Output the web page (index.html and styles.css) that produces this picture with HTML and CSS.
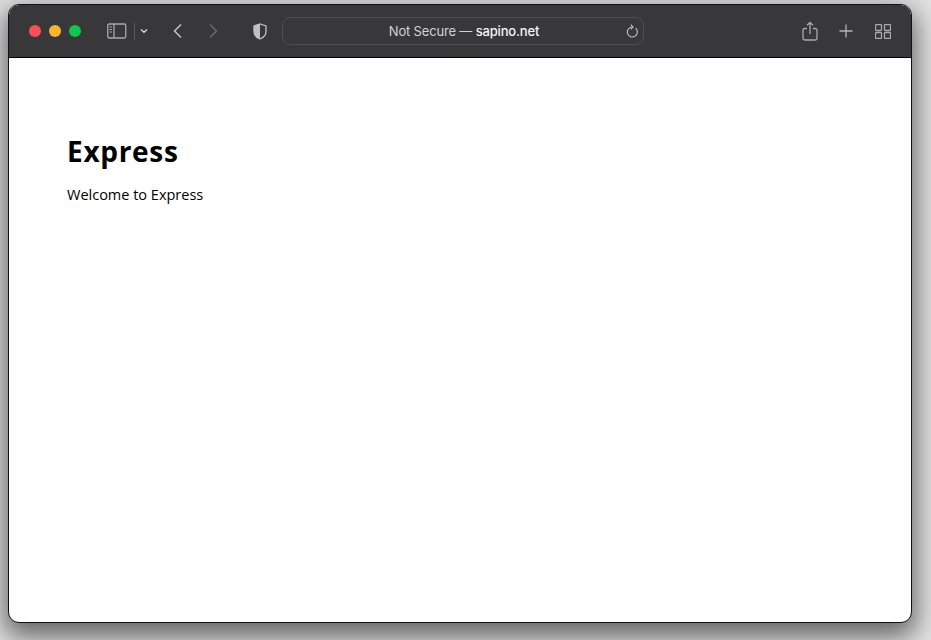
FILE: index.html

```html
<!doctype html>
<html lang="en">
<head>
    <meta charset="UTF-8">
    <title>Express</title>
    <link rel="stylesheet" href="styles.css">
</head>
<body>

<div class="window">
    <div class="toolbar">
        <div class="lights">
            <span class="light red"></span>
            <span class="light yellow"></span>
            <span class="light green"></span>
        </div>

        <svg class="icon sidebar-icon" width="20" height="16" viewBox="0 0 20 16">
            <rect x="0.75" y="1" width="18" height="14" rx="1.5"/>
            <path d="M7 1v14"/>
            <path class="thin" d="M2.5 4h2.500M2.500 6.500h2.500M2.500 9h2.500"/>
        </svg>
        <span class="divider"></span>
        <svg class="icon chevron-down" width="8" height="6" viewBox="0 0 8 6">
            <path d="M1 1.500l3 2.800 3-2.800"/>
        </svg>

        <svg class="icon back" width="10" height="16" viewBox="0 0 10 16">
            <path d="M8 1.500L1.500 8 8 14.500"/>
        </svg>
        <svg class="icon forward" width="10" height="16" viewBox="0 0 10 16">
            <path d="M2 1.500L8.500 8 2 14.500"/>
        </svg>

        <svg class="shield" width="14" height="17" viewBox="0 0 14 17">
            <path class="shield-fill" d="M7 1L1 3v5.500C1 12 3.500 14.600 7 16z"/>
            <path class="shield-line" d="M7 1l6 2v5.500C13 12 10.500 14.600 7 16 3.500 14.600 1 12 1 8.500V3z"/>
        </svg>

        <div class="url-bar">
            <span class="url-text">Not Secure — <span class="url-host">sapino.net</span></span>
            <svg class="icon reload" width="12" height="14" viewBox="0 0 12 14">
                <path d="M9.600 4.200A5 5 0 1 1 6 3"/>
                <path d="M4.800 0.700L7 3 4.800 5.300"/>
            </svg>
        </div>

        <svg class="icon share" width="16" height="20" viewBox="0 0 16 20">
            <path d="M5 7.500H2.800A1.800 1.800 0 0 0 1 9.300v7.900A1.800 1.800 0 0 0 2.800 19h10.400a1.800 1.800 0 0 0 1.800-1.800V9.300a1.800 1.800 0 0 0-1.800-1.800H11"/>
            <path d="M8 13V1.500M5 4.300l3-2.800 3 2.800"/>
        </svg>
        <svg class="icon plus" width="14" height="14" viewBox="0 0 14 14">
            <path d="M7 0.500v13M0.500 7h13"/>
        </svg>
        <svg class="icon tabs" width="16" height="15" viewBox="0 0 16 15">
            <rect x="0.500" y="0.500" width="6" height="6" rx="0.800"/>
            <rect x="9.500" y="0.500" width="6" height="6" rx="0.800"/>
            <rect x="0.500" y="8.500" width="6" height="6" rx="0.800"/>
            <rect x="9.500" y="8.500" width="6" height="6" rx="0.800"/>
        </svg>
    </div>

    <div class="content">
        <h1>Express</h1>
        <p>Welcome to Express</p>
    </div>
</div>

</body>
</html>
```

FILE: styles.css

```css
html, body {
    height: 100%;
    margin: 0;
}

body {
    background: #e2e2e2;
    overflow: hidden;
    padding: 4px 19px 0 8px;
    box-sizing: border-box;
}

.window {
    height: 619px;
    box-sizing: border-box;
    display: flex;
    flex-direction: column;
    background: #fff;
    border: 1px solid #111;
    border-radius: 11px;
    overflow: hidden;
    box-shadow: 0 10px 26px 4px rgba(0, 0, 0, .55);
}

.toolbar {
    height: 52px;
    flex: none;
    display: flex;
    align-items: center;
    padding-left: 20px;
    background: #38383b;
    border-bottom: 1px solid #000;
}

.lights {
    display: flex;
    gap: 8px;
    margin-right: 26px;
}

.light {
    width: 12px;
    height: 12px;
    border-radius: 50%;
}

.red { background: #fb4f57; }
.yellow { background: #fbb331; }
.green { background: #0cc653; }

.icon {
    fill: none;
    stroke: #a9a9ab;
    stroke-width: 1.3;
    flex: none;
}

.thin { stroke-width: 1; }

.divider {
    width: 1px;
    height: 17px;
    margin: 0 5px 0 7px;
    background: #59595c;
}

.chevron-down { stroke: #d4d4d6; stroke-width: 1.5; }

.back { margin-left: 25px; stroke: #c4c4c6; stroke-width: 1.5; }
.forward { margin-left: 25px; stroke: #68686b; stroke-width: 1.5; }

.shield { margin-left: 35px; flex: none; }
.shield-fill { fill: #c0c0c2; }
.shield-line { fill: none; stroke: #c0c0c2; stroke-width: 1.3; }

.url-bar {
    position: relative;
    width: 360px;
    height: 26px;
    margin: -1px 0 0 15px;
    padding-left: 2px;
    box-sizing: content-box;
    width: 358px;
    display: flex;
    align-items: center;
    justify-content: center;
    border: 1px solid #4e4e51;
    border-radius: 8px;
    font: 13px "Inter", "Liberation Sans", sans-serif;
    letter-spacing: -.17px;
    color: #d2d2d4;
}

.url-host {
    color: #f4f4f4;
    font-weight: 500;
}

.reload {
    position: absolute;
    right: 5px;
    top: 6px;
    stroke: #c4c4c6;
    stroke-width: 1.1;
}

.share { margin-left: 158px; }
.plus { margin-left: 21px; stroke: #b4b4b6; }
.tabs { margin-left: 22px; }

.content {
    flex: 1;
    padding: 75px 58px 0;
    color: #000;
    font-family: "Open Sans", sans-serif;
}

h1 {
    margin: 0 0 17px;
    font-size: 28px;
    line-height: 36px;
    font-weight: 700;
    letter-spacing: .7px;
}

p {
    margin: 0;
    font-size: 14.5px;
    line-height: 18px;
}
```
